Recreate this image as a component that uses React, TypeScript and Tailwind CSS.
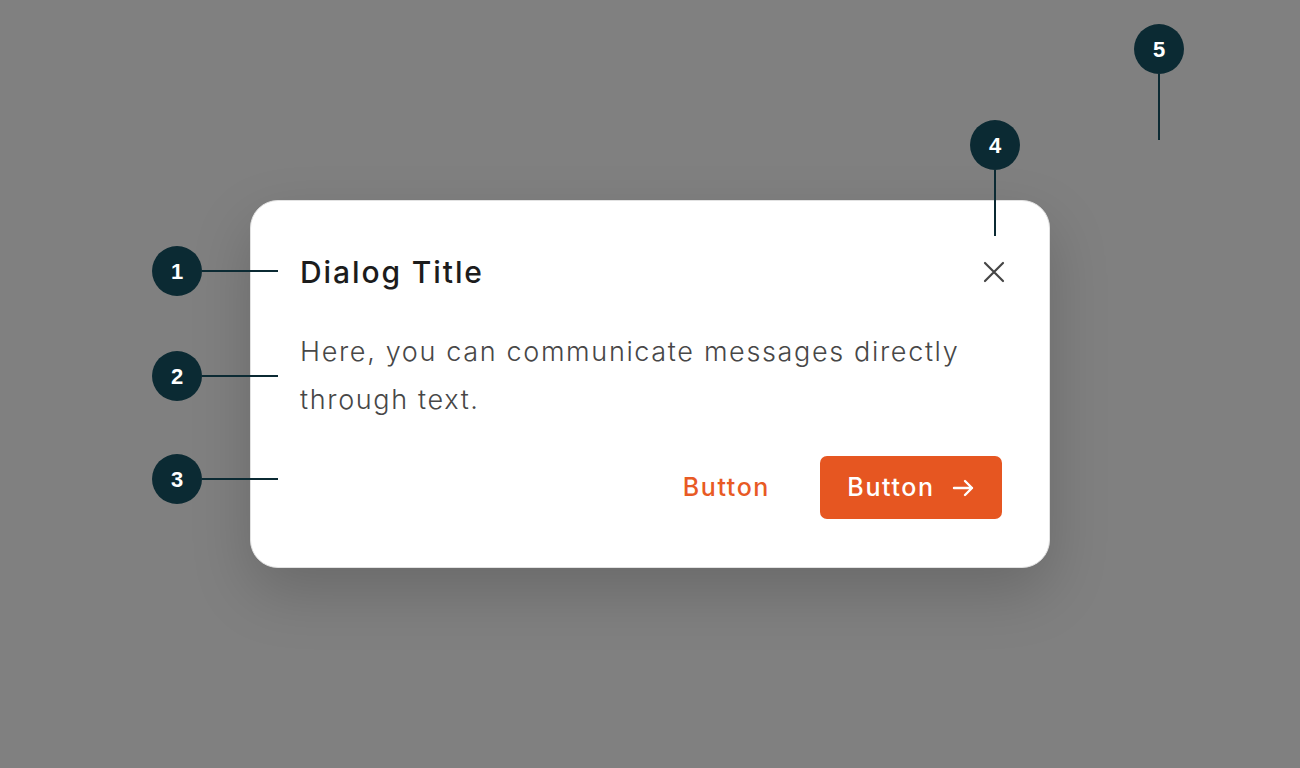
const Marker = ({ n, className }: { n: number; className: string }) => (
  <div
    className={`absolute w-[50px] h-[50px] rounded-full bg-[#0b2a33] text-white flex items-center justify-center text-[22px] font-bold ${className}`}
    style={{ fontFamily: "'Liberation Sans', Arial, sans-serif" }}
  >
    {n}
  </div>
);

const App = () => {
  return (
    <div
      className="w-[1300px] h-[768px] bg-[#808080] flex items-center justify-center overflow-hidden"
      style={{ fontFamily: "Inter, 'Open Sans', sans-serif" }}
    >
      <div className="relative">
        {/* Dialog */}
        <div className="w-[800px] h-[368px] bg-white rounded-[28px] border border-[#e2e2e2] shadow-[0_24px_60px_rgba(0,0,0,0.18)] pl-[49px] pr-[47px] pt-[49px] pb-[48px] flex flex-col">
          <div className="flex items-center justify-between h-[44px]">
            <h2 className="text-[30px] font-medium text-[#1c1c1c] tracking-[1.9px]">Dialog Title</h2>
            <button className="w-[24px] h-[24px] flex items-center justify-center text-[#454545] mr-[-4px]">
              <svg width="22" height="22" viewBox="0 0 22 22" fill="none" stroke="currentColor" strokeWidth="2.2" strokeLinecap="round">
                <path d="M2 2L20 20M20 2L2 20" />
              </svg>
            </button>
          </div>
          <p className="mt-[34px] text-[27px] leading-[48px] text-[#474747] font-light tracking-[1.65px] w-[690px]">
            Here, you can communicate messages directly through text.
          </p>
          <div className="mt-auto flex items-center justify-end gap-[50px]">
            <button className="text-[25px] font-medium text-[#e85a24] tracking-[1.6px]">Button</button>
            <button className="h-[63px] w-[182px] rounded-[7px] bg-[#e65621] text-white text-[25px] font-medium tracking-[1.6px] flex items-center justify-center gap-[16px]">
              Button
              <svg width="24" height="24" viewBox="0 0 24 24" fill="none" stroke="currentColor" strokeWidth="2.4" strokeLinecap="round" strokeLinejoin="round">
                <path d="M3 12h18M14 5l7 7-7 7" />
              </svg>
            </button>
          </div>
        </div>

        {/* Annotations */}
        <Marker n={1} className="left-[-98px] top-[46px]" />
        <div className="absolute left-[-48px] top-[70px] w-[76px] h-[2px] bg-[#0b2a33]" />
        <Marker n={2} className="left-[-98px] top-[151px]" />
        <div className="absolute left-[-48px] top-[175px] w-[76px] h-[2px] bg-[#0b2a33]" />
        <Marker n={3} className="left-[-98px] top-[254px]" />
        <div className="absolute left-[-48px] top-[278px] w-[76px] h-[2px] bg-[#0b2a33]" />
        <Marker n={4} className="left-[720px] top-[-80px]" />
        <div className="absolute left-[744px] top-[-30px] w-[2px] h-[66px] bg-[#0b2a33]" />
        <Marker n={5} className="left-[884px] top-[-176px]" />
        <div className="absolute left-[908px] top-[-126px] w-[2px] h-[66px] bg-[#0b2a33]" />
      </div>
    </div>
  );
};

export default App;
